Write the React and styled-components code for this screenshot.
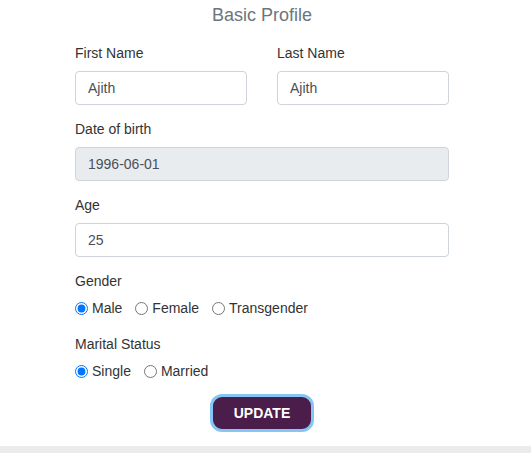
import React from 'react';
import styled, { createGlobalStyle } from 'styled-components';

const GlobalStyle = createGlobalStyle`
    body {
        margin: 0;
        background: #fff;
        font-family: "Liberation Sans", Arial, sans-serif;
        color: #212529;
    }
`

const Page = styled.div`
    display: flex;
    flex-direction: column;
    min-height: 453px;
`

// 表单区域, 略偏左于页面中心
const Card = styled.div`
    display: flex;
    flex-direction: column;
    align-items: center;
    padding: 4px 7px 14px 0;
`

const Title = styled.h3`
    margin: 0 0 17px;
    font-size: 18px;
    font-weight: normal;
    line-height: 22px;
    color: #6c757d;
`

const Form = styled.form`
    display: flex;
    flex-direction: column;
    width: 374px;
`

const Row = styled.div`
    display: grid;
    grid-template-columns: minmax(0, 1fr) minmax(0, 1fr);
    column-gap: 30px;
`

const Group = styled.div`
    display: flex;
    flex-direction: column;
    min-width: 0;
    margin-bottom: ${props => props.spacing || 14}px;
`

const Label = styled.label`
    font-size: 14px;
    line-height: 20px;
    margin-bottom: ${props => props.gap || 8}px;
    color: #333;
`

const Input = styled.input`
    box-sizing: border-box;
    width: 100%;
    min-width: 0;
    height: 34px;
    padding: 0 12px;
    font-family: inherit;
    font-size: 14px;
    color: #495057;
    background: ${props => props.disabled ? '#e9ecef' : '#fff'};
    border: 1px solid #ced4da;
    border-radius: 4px;
    outline: none;
    &:disabled {
        color: #495057;
        -webkit-text-fill-color: #495057;
        opacity: 1;
    }
`

const RadioRow = styled.div`
    display: flex;
    align-items: center;
    gap: 13px;
    height: 20px;
`

const RadioItem = styled.label`
    display: flex;
    align-items: center;
    font-size: 14px;
    color: #333;
    & > input {
        width: 13px;
        height: 13px;
        margin: 0 4px 0 0;
        accent-color: #0075ff;
    }
`

const Actions = styled.div`
    display: flex;
    justify-content: center;
`

const UpdateButton = styled.button`
    box-sizing: border-box;
    width: 104px;
    height: 38px;
    background: #4a1d4a;
    color: #fff;
    font-family: inherit;
    font-size: 14px;
    font-weight: bold;
    border: 3px solid #86c6f7;
    border-radius: 12px;
    cursor: pointer;
`

const Footer = styled.div`
    flex: 1;
    background: #ebebeb;
`

function Radio({ name, label, checked }) {
    return (
        <RadioItem>
            <input type='radio' name={name} defaultChecked={checked} />
            {label}
        </RadioItem>
    )
}

export default function App() {
    return (
        <Page>
            <GlobalStyle />
            <Card>
                <Title>Basic Profile</Title>
                <Form onSubmit={e => e.preventDefault()}>
                    <Row>
                        <Group>
                            <Label>First Name</Label>
                            <Input defaultValue='Ajith' />
                        </Group>
                        <Group>
                            <Label>Last Name</Label>
                            <Input defaultValue='Ajith' />
                        </Group>
                    </Row>
                    <Group>
                        <Label>Date of birth</Label>
                        <Input defaultValue='1996-06-01' disabled />
                    </Group>
                    <Group>
                        <Label>Age</Label>
                        <Input defaultValue='25' />
                    </Group>
                    <Group spacing={16}>
                        <Label gap={7}>Gender</Label>
                        <RadioRow>
                            <Radio name='gender' label='Male' checked />
                            <Radio name='gender' label='Female' />
                            <Radio name='gender' label='Transgender' />
                        </RadioRow>
                    </Group>
                    <Group spacing={13}>
                        <Label gap={7}>Marital Status</Label>
                        <RadioRow>
                            <Radio name='marital' label='Single' checked />
                            <Radio name='marital' label='Married' />
                        </RadioRow>
                    </Group>
                    <Actions>
                        <UpdateButton type='submit'>UPDATE</UpdateButton>
                    </Actions>
                </Form>
            </Card>
            <Footer />
        </Page>
    )
}
